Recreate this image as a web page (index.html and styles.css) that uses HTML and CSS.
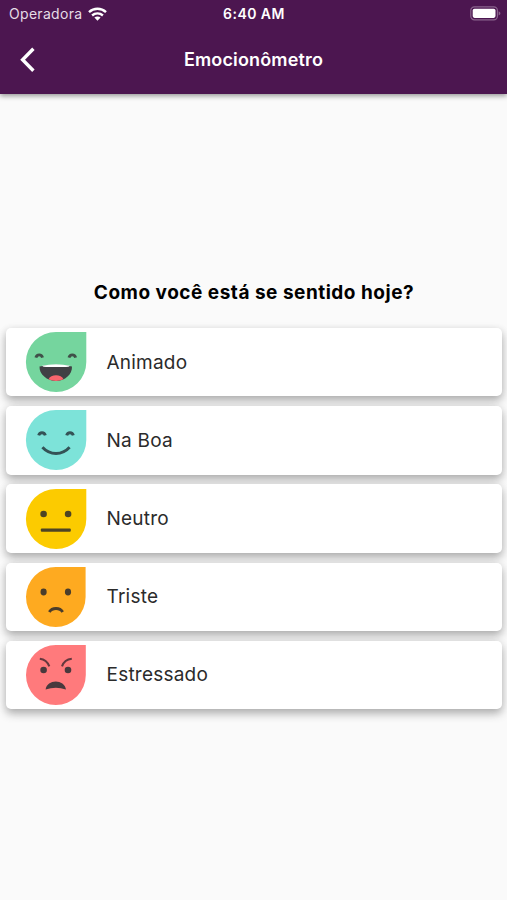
FILE: index.html
```html
<!DOCTYPE html>
<html lang="pt-BR">
<head>
<meta charset="utf-8">
<title>Emocionômetro</title>
<link rel="stylesheet" href="styles.css">
</head>
<body>
<header class="header">
  <div class="status">
    <div class="carrier"><span>Operadora</span>
      <svg class="wifi" viewBox="0 0 19 14"><g fill="none" stroke="#fff" stroke-width="2.4"><path d="M1 5.1C5.8.6 13.2.6 18 5.1"/><path d="M4.1 8.5C7.2 5.7 11.8 5.7 14.9 8.5"/></g><path fill="#fff" d="M6.4 10.6c1.8-1.5 4.4-1.5 6.2 0L9.5 13.8z"/></svg>
    </div>
    <div class="time">6:40 AM</div>
    <svg class="battery" viewBox="0 0 31 15"><rect x=".8" y=".8" width="26.6" height="13" rx="3.6" fill="none" stroke="#8a648d" stroke-width="1.2"/><rect x="2.7" y="2.7" width="22.8" height="9.2" rx="1.8" fill="#fff"/><path d="M28.6 5.2c2.4 1 2.4 3.2 0 4.2z" fill="#8a648d"/></svg>
  </div>
  <div class="bar">
    <svg class="back" viewBox="0 0 16 26"><path d="M13.4 1.8 2.6 12.8l10.8 11" fill="none" stroke="#fff" stroke-width="3.4"/></svg>
    <h1 class="title">Emocionômetro</h1>
  </div>
</header>
<main class="main">
  <h2 class="question">Como você está se sentido hoje?</h2>
  <div class="list">
    <div class="card">
      <svg class="face" viewBox="0 0 62 62"><path fill="#75d59e" d="M31 1H61.3V31A30.2 30 0 1 1 31 1Z"/><g fill="none" stroke="#405049" stroke-width="2.9"><path d="M10.9 26.6C11.7 23 16.7 23 17.5 26.6M44 26.6C44.8 23 49.8 23 50.6 26.6"/></g><path fill="#404044" d="M14.5 35.5Q31 32 47 35.5C47.5 43 40 50 31 50S14 43 14.5 35.5Z"/><path fill="#fff" d="M17 34.7Q31 31.7 45 34.7Q44 36 41 36H21Q18 36 17 34.7Z"/><path fill="#f9656d" d="M23.5 48.3C25.5 42.8 36.5 42.8 38.5 48.3Q31 51.6 23.5 48.3Z"/></svg>
      <span class="label">Animado</span>
    </div>
    <div class="card">
      <svg class="face" viewBox="0 0 62 62"><path fill="#7de3d9" d="M31 1H61.3V31A30.2 30 0 1 1 31 1Z"/><g fill="none" stroke="#345356" stroke-width="2.9"><path d="M13.7 26.4C14.5 22.8 19.5 22.8 20.3 26.4M41.7 26.4C42.5 22.8 47.5 22.8 48.3 26.4"/><path d="M17.4 38.2C25 46.5 37 46.5 44.6 38.2"/></g></svg>
      <span class="label">Na Boa</span>
    </div>
    <div class="card">
      <svg class="face" viewBox="0 0 62 62"><path fill="#fccb00" d="M31 1H61.3V31A30.2 30 0 1 1 31 1Z"/><g fill="#4d4424"><circle cx="18.6" cy="26" r="3.3"/><circle cx="43.1" cy="26" r="3.3"/><rect x="15.8" y="40.5" width="30" height="3.2" rx="1"/></g></svg>
      <span class="label">Neutro</span>
    </div>
    <div class="card">
      <svg class="face" viewBox="0 0 62 62"><path fill="#feaa20" d="M31 1H60.6V31A29.8 30 0 1 1 31 1Z"/><g fill="#4a3d2b"><ellipse cx="18.6" cy="26" rx="3.1" ry="3.4"/><ellipse cx="43" cy="26" rx="3.1" ry="3.4"/></g><path d="M24.3 46C27 41.3 35 41.3 37.7 46" fill="none" stroke="#4a3d2b" stroke-width="2.8"/></svg>
      <span class="label">Triste</span>
    </div>
    <div class="card">
      <svg class="face" viewBox="0 0 62 62"><path fill="#ff7a7c" d="M31 1H60.8V31A29.9 30 0 1 1 31 1Z"/><g fill="#48393d"><circle cx="18.6" cy="26" r="3.3"/><circle cx="43" cy="26" r="3.3"/><path d="M20.6 45.5C22 34.7 39.5 34.7 41 45.5Q31 41.8 20.6 45.5Z"/></g><path d="M14.8 14.8C19.5 15.3 22.6 18 24.3 22.4M46.8 14.8C42.1 15.3 38.5 18 37 22.4" fill="none" stroke="#64383e" stroke-width="2.1"/></svg>
      <span class="label">Estressado</span>
    </div>
  </div>
</main>
</body>
</html>
```
FILE: styles.css
```css
* { box-sizing: border-box; }

body {
  margin: 0;
  height: 900px;
  background: #fafafa;
  font-family: Inter, "Liberation Sans", sans-serif;
  overflow: hidden;
}

.header {
  height: 94px;
  background: #4c1650;
  color: #fff;
  box-shadow: 0 2px 5px rgba(0, 0, 0, .4);
}

.status {
  display: grid;
  grid-template-columns: 1fr auto 1fr;
  align-items: center;
  height: 27px;
  padding: 0 6px 0 9px;
}

.carrier {
  display: flex;
  align-items: center;
  gap: 6px;
  font-size: 14px;
  letter-spacing: .3px;
  color: #e5dce6;
}

.wifi { width: 19px; height: 14px; }

.time {
  font-size: 14px;
  font-weight: 600;
  letter-spacing: .45px;
  margin-right: 2px;
}

.battery {
  width: 31px;
  height: 15px;
  justify-self: end;
}

.bar {
  display: grid;
  grid-template-columns: 16px 1fr 16px;
  align-items: center;
  height: 65px;
  padding: 0 20px;
}

.back { width: 16px; height: 26px; }

.title {
  margin: 0;
  text-align: center;
  font-size: 18px;
  font-weight: 600;
  letter-spacing: .15px;
}

.main { padding: 184px 5px 0 6px; }

.question {
  margin: 0;
  height: 50px;
  line-height: 29px;
  text-align: center;
  font-size: 19px;
  font-weight: 700;
  letter-spacing: .51px;
  color: #000;
}

.list {
  display: flex;
  flex-direction: column;
  gap: 9.8px;
}

.card {
  display: flex;
  align-items: center;
  gap: 19.5px;
  height: 68.4px;
  padding-left: 19px;
  border-radius: 5px;
  background: #fff;
  box-shadow: 0 5px 10px rgba(0, 0, 0, .24), 0 2px 8px rgba(0, 0, 0, .12);
}

.face { width: 62px; height: 62px; }

.label {
  font-size: 19px;
  letter-spacing: .22px;
  color: #2b2b2b;
}
```
